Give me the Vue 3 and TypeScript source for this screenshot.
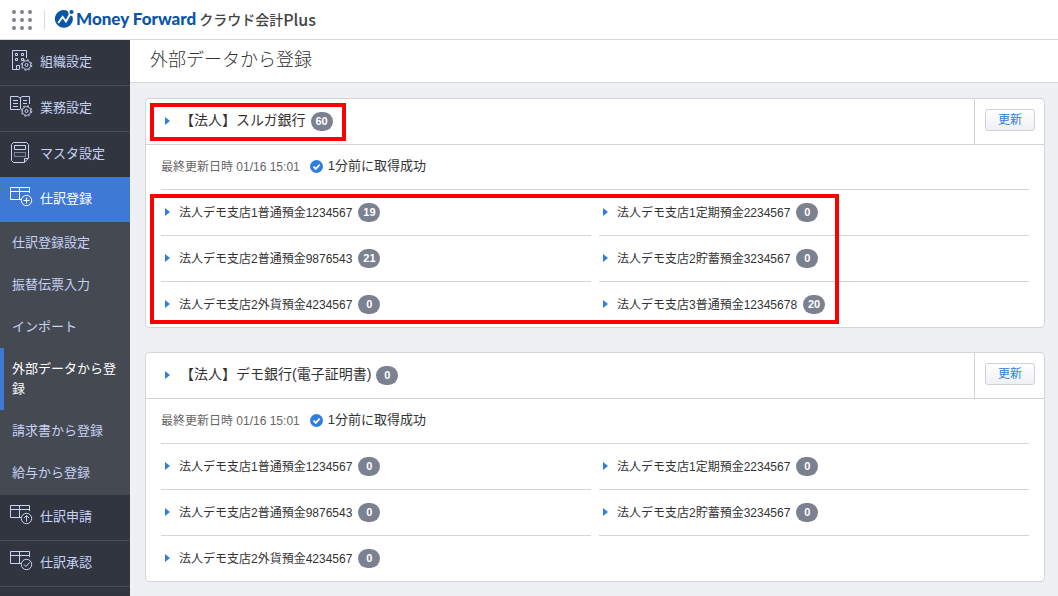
<script setup lang="ts">
interface Account {
  name: string
  count: number
}
interface Bank {
  name: string
  count: number
  updated: string
  status: string
  marked: boolean
  accounts: Account[]
}
interface MenuItem {
  label: string
  icon: 'building' | 'book' | 'master' | 'plus' | 'up' | 'check'
  active?: boolean
  children?: { label: string; current?: boolean }[]
}

const menu: MenuItem[] = [
  { label: '組織設定', icon: 'building' },
  { label: '業務設定', icon: 'book' },
  { label: 'マスタ設定', icon: 'master' },
  {
    label: '仕訳登録',
    icon: 'plus',
    active: true,
    children: [
      { label: '仕訳登録設定' },
      { label: '振替伝票入力' },
      { label: 'インポート' },
      { label: '外部データから登録', current: true },
      { label: '請求書から登録' },
      { label: '給与から登録' },
    ],
  },
  { label: '仕訳申請', icon: 'up' },
  { label: '仕訳承認', icon: 'check' },
]

const banks: Bank[] = [
  {
    name: '【法人】スルガ銀行',
    count: 60,
    updated: '01/16 15:01',
    status: '1分前に取得成功',
    marked: true,
    accounts: [
      { name: '法人デモ支店1普通預金1234567', count: 19 },
      { name: '法人デモ支店1定期預金2234567', count: 0 },
      { name: '法人デモ支店2普通預金9876543', count: 21 },
      { name: '法人デモ支店2貯蓄預金3234567', count: 0 },
      { name: '法人デモ支店2外貨預金4234567', count: 0 },
      { name: '法人デモ支店3普通預金12345678', count: 20 },
    ],
  },
  {
    name: '【法人】デモ銀行(電子証明書)',
    count: 0,
    updated: '01/16 15:01',
    status: '1分前に取得成功',
    marked: false,
    accounts: [
      { name: '法人デモ支店1普通預金1234567', count: 0 },
      { name: '法人デモ支店1定期預金2234567', count: 0 },
      { name: '法人デモ支店2普通預金9876543', count: 0 },
      { name: '法人デモ支店2貯蓄預金3234567', count: 0 },
      { name: '法人デモ支店2外貨預金4234567', count: 0 },
    ],
  },
]
</script>

<template>
  <div class="app">
    <header class="topbar">
      <button class="apps" type="button" aria-label="サービス一覧">
        <svg width="20" height="20" viewBox="0 0 20 20" fill="#7c8190">
          <template v-for="r in 3" :key="r">
            <circle v-for="c in 3" :key="c" :cx="c * 8 - 6" :cy="r * 8 - 6" r="2" />
          </template>
        </svg>
      </button>
      <a class="brand" href="#">
        <svg class="mark" width="20" height="20" viewBox="0 0 20 20">
          <path d="M13.600 1.900A9 8.800 0 1 0 18.600 7.800L16.600 6.200 12 14.200 8.700 9.600 4.900 14.400 3.500 13.300 8.600 6.300 11.800 10.800 14.800 5.200Z" fill="#0b55a6" />
          <circle cx="17.500" cy="3" r="2.100" fill="#0b55a6" />
        </svg>
        <span class="brand-name">Money Forward</span>
        <span class="product">クラウド会計<span class="plus">Plus</span></span>
      </a>
    </header>

    <div class="body">
      <nav class="sidebar">
        <template v-for="item in menu" :key="item.label">
          <a class="main-item" :class="{ active: item.active }" href="#">
            <svg class="menu-icon" width="24" height="24" viewBox="0 0 24 24" fill="none" stroke="currentColor">
              <template v-if="item.icon === 'building'">
                <path d="M9.500 20.500H2.500V1.500H16.500V9M6.500 20.500V16.500H9.500V20" />
                <path d="M5.500 4.500h2v2h-2zM11.500 4.500h2v2h-2zM5.500 9.500h2v2h-2zM11.500 9.500h2v2h-2z" />
              </template>
              <template v-if="item.icon === 'book'">
                <path d="M10 14.500H.5V1.500H8l2 1.500 2-1.500H19.500V9M10.500 3V14M3 5.500H8M3 8.500H8M3 11.500H8M13 5.500H17M13 8.500H17" />
              </template>
              <template v-if="item.icon === 'building' || item.icon === 'book'">
                <circle cx="16.500" cy="16" r="4.300" />
                <circle cx="16.500" cy="16" r="5.300" stroke-dasharray="2 2.160" />
                <circle cx="16.500" cy="16" r="1.500" />
              </template>
              <template v-if="item.icon === 'master'">
                <path d="M3.500 1.500H16.500L18.500 3.500V17L14.500 21.500H3.500L1.500 19.500V3.500ZM14.500 21V17.500H18M4.500 4.500H15.500V8.500H4.500Z" />
                <path d="M4.500 11.500H15.500V15.500H4.500Z" stroke-dasharray="1 1" />
              </template>
              <template v-if="item.icon === 'plus' || item.icon === 'up' || item.icon === 'check'">
                <path d="M11 13.500H.5V1.500H19.500V7M.5 5.500H19.500M9.500 1.500V13" />
                <circle cx="16.500" cy="14.500" r="5.200" />
              </template>
              <path v-if="item.icon === 'plus'" d="M16.500 11.500V17.500M13.500 14.500H19.500" />
              <path v-if="item.icon === 'up'" d="M16.500 17.500V12M14 14L16.500 11.500L19 14" />
              <path v-if="item.icon === 'check'" d="M14 14.500L16 16.500L19.500 12.500" />
            </svg>
            <span>{{ item.label }}</span>
          </a>
          <div v-if="item.children" class="submenu">
            <a
              v-for="child in item.children"
              :key="child.label"
              class="sub-item"
              :class="{ current: child.current }"
              href="#"
            >{{ child.label }}</a>
          </div>
        </template>
      </nav>

      <main class="main">
        <h1 class="page-title">外部データから登録</h1>
        <div class="cards">
          <section v-for="bank in banks" :key="bank.name" class="card">
            <div class="card-head">
              <a class="bank" href="#">
                <span class="arrow"></span>
                <span class="bank-name">{{ bank.name }}</span>
                <span class="badge">{{ bank.count }}</span>
              </a>
              <div class="head-action">
                <button class="refresh" type="button">更新</button>
              </div>
              <span v-if="bank.marked" class="frame frame-head"></span>
            </div>
            <div class="card-body">
              <div class="info">
                <span class="date">最終更新日時 {{ bank.updated }}</span>
                <svg width="13" height="13" viewBox="0 0 13 13">
                  <circle cx="6.500" cy="6.500" r="6.500" fill="#2f7de1" />
                  <path d="M3.500 6.700L5.700 8.900L9.700 4.700" fill="none" stroke="#fff" stroke-width="1.800" />
                </svg>
                <span class="status">{{ bank.status }}</span>
              </div>
              <ul class="accounts">
                <li v-for="account in bank.accounts" :key="account.name">
                  <a class="account" href="#">
                    <span class="arrow"></span>
                    <span class="account-name">{{ account.name }}</span>
                    <span class="badge">{{ account.count }}</span>
                  </a>
                </li>
              </ul>
              <span v-if="bank.marked" class="frame frame-list"></span>
            </div>
          </section>
        </div>
      </main>
    </div>
  </div>
</template>

<style>
body {
  margin: 0;
  background: #eff0f4;
  overflow: hidden;
}
</style>

<style scoped>
.app {
  display: flex;
  flex-direction: column;
  height: 100vh;
  overflow: hidden;
  box-sizing: border-box;
  font-family: "Liberation Sans", "Noto Sans CJK JP", sans-serif;
  font-size: 12px;
  color: #333;
}
.app * {
  box-sizing: border-box;
}
a {
  color: inherit;
  text-decoration: none;
}
.topbar {
  display: flex;
  flex: none;
  align-items: center;
  height: 40px;
  padding-left: 12px;
  background: #fff;
  border-bottom: 1px solid #d5d8dd;
}
.apps {
  display: flex;
  padding: 0 12px 0 0;
  border: 0;
  border-right: 1px solid #d5d8dd;
  background: none;
}
.brand {
  display: flex;
  align-items: center;
  padding: 0 0 2px 9px;
  line-height: 24px;
  white-space: nowrap;
}
.brand-name {
  margin-left: 2px;
  color: #0b55a6;
  font: 900 17px/24px Lato, sans-serif;
}
.product {
  display: flex;
  margin-left: 3px;
  color: #444;
  font: 500 14px/24px "Noto Sans CJK JP", sans-serif;
}
.plus {
  font-size: 16px;
}
.body {
  display: flex;
  flex: 1;
  min-height: 0;
}
.sidebar {
  flex: none;
  width: 130px;
  background: #31353f;
  color: #c7d2f5;
  font-size: 13px;
  overflow: hidden;
}
.main-item {
  display: flex;
  align-items: center;
  gap: 6px;
  height: 46px;
  padding: 0 0 2px 10px;
  border-bottom: 1px solid #474c57;
  line-height: 20px;
}
.main-item.active {
  height: 45px;
  margin-top: -1px;
  background: #3e7ad3;
  border-bottom: 0;
  color: #fff;
}
.menu-icon {
  flex: none;
  margin-bottom: 2px;
}
.submenu {
  padding-bottom: 1px;
  background: #444952;
}
.sub-item {
  display: block;
  padding: 11px 12px;
  line-height: 20px;
}
.sub-item.current {
  padding-left: 8px;
  border-left: 4px solid #3e7ad3;
  color: #fff;
}
.main {
  flex: 1;
  min-width: 0;
}
.page-title {
  margin: 0;
  padding: 0 20px;
  height: 43px;
  border-bottom: 1px solid #d5d8dd;
  background: #fff;
  font-size: 18px;
  font-weight: 300;
  line-height: 40px;
}
.cards {
  display: flex;
  flex-direction: column;
  gap: 24px;
  padding: 15px 13px 15px 15px;
}
.card {
  border: 1px solid #d2d6db;
  border-radius: 4px;
  background: #fff;
}
.card-head {
  position: relative;
  display: flex;
  height: 46px;
  border-bottom: 1px solid #d2d6db;
}
.bank {
  display: flex;
  flex: 1;
  align-items: center;
  padding: 0 0 2px 19px;
  font-size: 14px;
}
.bank-name {
  margin: 0 5px 0 10px;
  padding-bottom: 4px;
}
.arrow {
  border: 4px solid transparent;
  border-left: 5px solid #2f7de1;
  border-right: 0;
}
.badge {
  min-width: 22px;
  margin-top: 2px;
  padding: 0 4px;
  border-radius: 10px;
  background: #7c8190;
  color: #fff;
  font-size: 11px;
  font-weight: bold;
  line-height: 19px;
  text-align: center;
}
.head-action {
  display: flex;
  align-items: center;
  padding: 0 9px 3px 10px;
  border-left: 1px solid #d2d6db;
}
.refresh {
  width: 50px;
  height: 22px;
  padding: 0;
  border: 1px solid #ced2d8;
  border-radius: 3px;
  background: linear-gradient(#fff, #eff0f4);
  color: #2f7de1;
  font: inherit;
  line-height: 20px;
}
.card-body {
  position: relative;
  padding: 0 15px;
}
.info {
  display: flex;
  align-items: center;
  height: 45px;
  padding-bottom: 2px;
  border-bottom: 1px solid #d5d5d5;
}
.date {
  margin-right: 10px;
  padding-bottom: 2px;
  color: #666;
}
.status {
  margin-left: 5px;
  padding-bottom: 4px;
  font-size: 13px;
}
.accounts {
  display: grid;
  grid-template-columns: 1fr 1fr;
  column-gap: 8px;
  margin: 0;
  padding: 0;
  list-style: none;
}
.accounts li {
  height: 46px;
  border-bottom: 1px solid #d5d5d5;
}
.accounts li:nth-child(n + 5) {
  height: 45px;
  border-bottom: 0;
}
.account {
  display: flex;
  align-items: center;
  height: 45px;
  padding: 0 0 2px 4px;
}
.account-name {
  margin: 0 6px 0 9px;
}
.frame {
  position: absolute;
  border: 4px solid #f00;
  pointer-events: none;
}
.frame-head {
  top: 4px;
  left: 4px;
  width: 196px;
  height: 38px;
}
.frame-list {
  top: 49px;
  bottom: 3px;
  left: 4px;
  width: 689px;
}
</style>
